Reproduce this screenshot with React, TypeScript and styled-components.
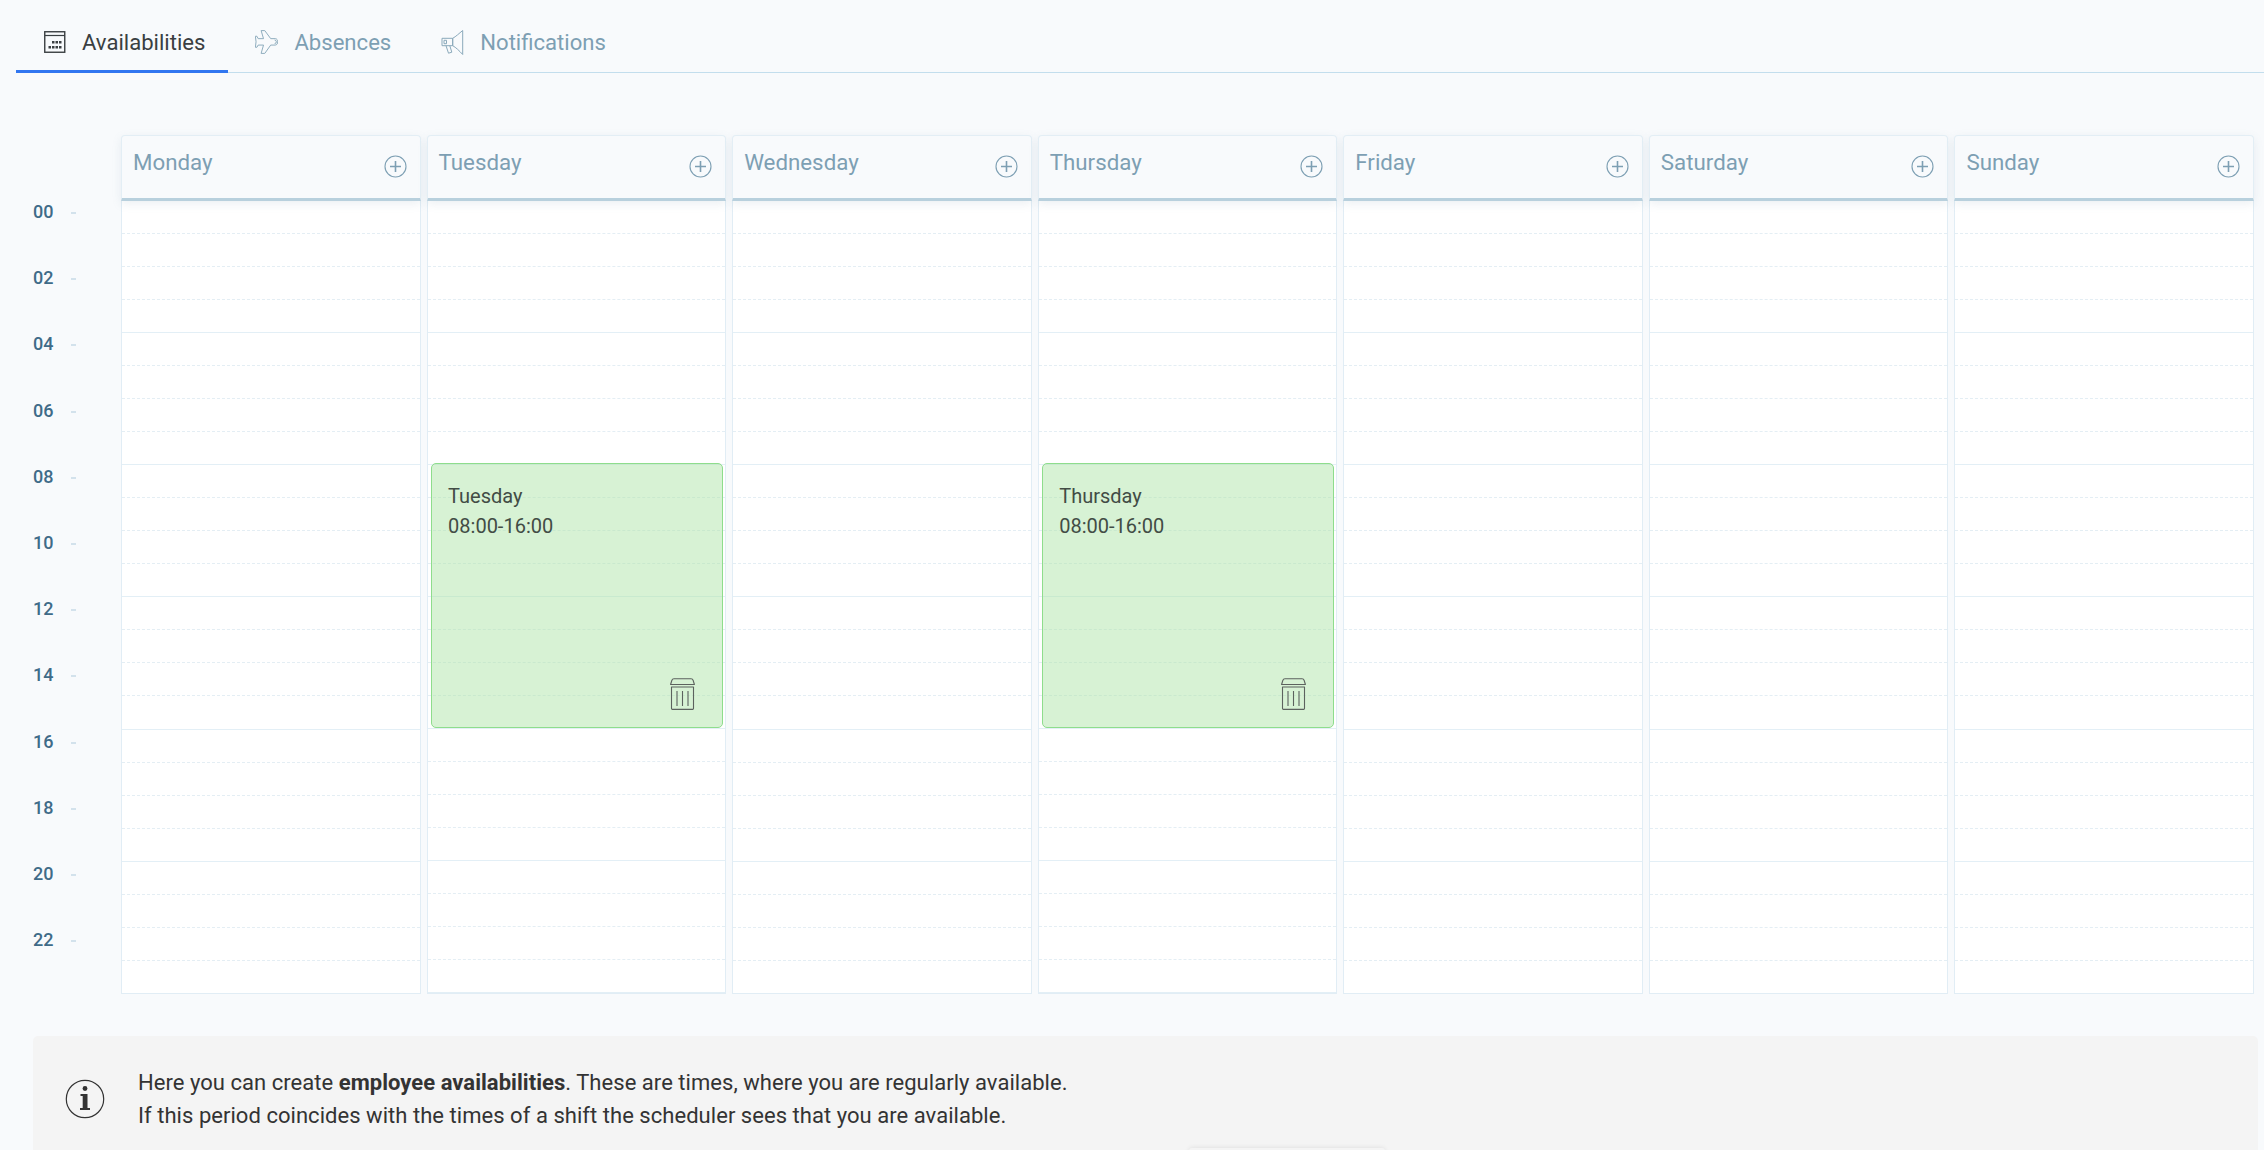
import React from "react";
import styled, { createGlobalStyle } from "styled-components";

const Global = createGlobalStyle`
  html, body { margin: 0; padding: 0; height: 100%; overflow: hidden; background: #f8fafc; }
  * { box-sizing: border-box; }
  #root { font-family: Roboto, "Liberation Sans", sans-serif; }
`;

const Page = styled.div`
  position: relative;
  width: 2264px;
  height: 1150px;
  overflow: hidden;
  display: flex;
  flex-direction: column;
  padding-left: 16px;
`;

const TabBar = styled.nav`
  display: flex;
  height: 73px;
  flex: none;
  border-bottom: 1px solid #c3deed;
`;

const Tab = styled.div<{ $active?: boolean }>`
  height: 73px;
  display: flex;
  align-items: center;
  gap: 16px;
  padding: 14px 23px 0 ${(p) => (p.$active ? "28px" : "27px")};
  font-size: 22.1px;
  color: ${(p) => (p.$active ? "#3a3f42" : "#7d9fb3")};
  border-bottom: 3px solid ${(p) => (p.$active ? "#3176f0" : "transparent")};
  svg { display: block; flex: none; }
`;

const Calendar = styled.section`
  display: flex;
  flex: none;
  margin-top: 62px;
  width: 2238px;
`;

const Axis = styled.div`
  flex: none;
  width: 105px;
  padding-top: 64px;
  display: flex;
  flex-direction: column;
`;

const AxisLabel = styled.div`
  height: 66.2px;
  display: flex;
  align-items: flex-start;
  padding-left: 17px;
  gap: 18px;
  font-size: 18px;
  line-height: 26px;
  font-weight: 500;
  color: #3f6b88;
`;

const AxisDash = styled.span`
  width: 5px;
  height: 2px;
  margin-top: 13px;
  background: #d3e2ec;
`;

const Days = styled.div`
  flex: 1;
  display: grid;
  grid-template-columns: repeat(7, 1fr);
  column-gap: 6px;
`;

const Day = styled.div`
  display: flex;
  flex-direction: column;
  min-width: 0;
`;

const DayHead = styled.header`
  position: relative;
  z-index: 1;
  height: 65.5px;
  display: flex;
  justify-content: space-between;
  padding: 10.5px 13px 0 11px;
  background: #f8fafc;
  border: 1px solid #e3eef5;
  border-bottom: 3px solid #b8d0dd;
  border-radius: 4px 4px 0 0;
  box-shadow: 0 3px 10px rgba(120, 150, 170, 0.14);
`;

const DayName = styled.span`
  font-size: 22.3px;
  line-height: 30px;
  color: #7d9fb3;
`;

const AddIcon = styled.svg`
  margin-top: 8px;
  flex: none;
`;

const DayBody = styled.div`
  position: relative;
  height: 793.5px;
  background: #fff;
  border: 1px solid #e1edf5;
  border-top: 0;
  display: flex;
  flex-direction: column;
`;

const Slot = styled.div<{ $major: boolean }>`
  flex: 1;
  border-bottom: 1px ${(p) => (p.$major ? "solid #e3eff6" : "dashed #e4eef4")};
  &:last-child { border-bottom: 0; }
`;

const Shift = styled.article`
  position: absolute;
  left: 3.5px;
  right: 2px;
  top: 262.5px;
  height: 265px;
  padding: 17px 16px;
  background: rgba(172, 228, 166, 0.48);
  border: 1px solid #8edd8c;
  border-radius: 5px;
  font-size: 20px;
  line-height: 30px;
  color: #424c45;
`;

const ShiftLine = styled.div``;

const TrashBtn = styled.svg`
  position: absolute;
  right: 27px;
  bottom: 17px;
  display: block;
`;

const Info = styled.aside`
  flex: none;
  margin: 42px 6px 0 17px;
  height: 160px;
  display: flex;
  align-items: flex-start;
  gap: 33px;
  padding: 29.5px 0 0 32px;
  background: #f4f4f4;
  border-radius: 5px;
`;

const InfoIcon = styled.svg`
  flex: none;
  margin-top: 13px;
`;

const InfoText = styled.p`
  margin: 0;
  font-size: 22px;
  line-height: 33px;
  letter-spacing: 0.04px;
  color: #333;
  strong { font-weight: 700; }
`;

const Peek = styled.div`
  position: absolute;
  left: 1189px;
  bottom: -4px;
  width: 196px;
  height: 6px;
  box-shadow: 0 0 5px rgba(0, 0, 0, 0.1);
  border-radius: 4px;
`;

const CalendarIcon = () => (
  <svg width="22" height="22" viewBox="0 0 22 22" fill="none" stroke="#3a3f42">
    <rect x="0.75" y="0.75" width="20" height="20.5" strokeWidth="1.4" />
    <path d="M1 4.5h20" strokeWidth="1.2" />
    <g fill="#3a3f42" stroke="none">
      {[8, 11.5, 15].map((x) => (
        <rect key={`a${x}`} x={x} y="10" width="2.5" height="2.500" />
      ))}
      {[4.5, 8, 11.5, 15].map((x) => (
        <rect key={`b${x}`} x={x} y="15" width="2.5" height="2.500" />
      ))}
    </g>
  </svg>
);

const PlaneIcon = () => (
  <svg width="23" height="24" viewBox="0 0 24 25" fill="none" stroke="#8aa9bb" strokeWidth="1" strokeLinejoin="round">
    <path d="M6.400.6h3.800l6.200 8.400h4.800c1.700 0 2.500 1.700 2.500 3.300s-.9 3.400-2.500 3.400h-4.800l-6.200 8.700H6.400l2.500-8.700H3.300L2 18H.4l.7-5.700L.4 6.500H2L3.300 9h5.600z" />
    <path d="M20.500 10.500a1.800 1.800 0 0 1 0 3.600" />
  </svg>
);

const MegaphoneIcon = () => (
  <svg width="23" height="25" viewBox="0 0 23 25" fill="none" stroke="#8aa9bb" strokeWidth="1" strokeLinejoin="round">
    <path d="M21.700.5v24C18 20.500 15 17.500 11.700 15.700V8.300C15 6.500 18 3.500 21.700.5z" />
    <rect x="1" y="8.300" width="10.700" height="7.400" />
    <path d="M5 15.700 7.500 23.200l3.300-1L8.800 15.700" />
    <path d="M3 10.300h2.500v3.400H3z" />
  </svg>
);

const PlusIcon = () => (
  <AddIcon width="23" height="23" viewBox="0 0 23 23" fill="none" stroke="#7d9fb3">
    <circle cx="11.5" cy="11.5" r="10.5" strokeWidth="1.1" />
    <path d="M11.5 6v11M6 11.5h11" strokeWidth="1.6" />
  </AddIcon>
);

const TrashIcon = () => (
  <TrashBtn width="25" height="32" viewBox="0 0 25 32" fill="none" stroke="#5c625e" strokeWidth="1.1" strokeLinejoin="round">
    <path d="M.6 6.500 1.800 2.500C2.200 1.300 3 .8 4 .8h17c1 0 1.800.5 2.200 1.700l1.200 4z" />
    <path d="M1.500 9h22v21.200a1.200 1.200 0 0 1-1.200 1.200H2.700a1.200 1.200 0 0 1-1.200-1.200z" />
    <path d="M7 13v15M12.500 13v15M18 13v15" />
  </TrashBtn>
);

const InfoGlyph = () => (
  <InfoIcon width="40" height="40" viewBox="0 0 40 40" fill="none">
    <circle cx="20" cy="20" r="18.700" stroke="#333" strokeWidth="1.2" />
    <circle cx="20" cy="9.500" r="2.400" fill="#333" />
    <path d="M15.500 15h7v14h2.500v2h-10v-2h2.700V17h-2.200z" fill="#333" />
  </InfoIcon>
);

const hours = ["00", "02", "04", "06", "08", "10", "12", "14", "16", "18", "20", "22"];
const days = ["Monday", "Tuesday", "Wednesday", "Thursday", "Friday", "Saturday", "Sunday"];
const shiftDays = new Set(["Tuesday", "Thursday"]);

export default function App() {
  return (
    <Page>
      <Global />
      <TabBar>
        <Tab $active>
          <CalendarIcon />
          Availabilities
        </Tab>
        <Tab>
          <PlaneIcon />
          Absences
        </Tab>
        <Tab>
          <MegaphoneIcon />
          Notifications
        </Tab>
      </TabBar>
      <Calendar>
        <Axis>
          {hours.map((h) => (
            <AxisLabel key={h}>
              {h}
              <AxisDash />
            </AxisLabel>
          ))}
        </Axis>
        <Days>
          {days.map((d) => (
            <Day key={d}>
              <DayHead>
                <DayName>{d}</DayName>
                <PlusIcon />
              </DayHead>
              <DayBody>
                {Array.from({ length: 24 }, (_, i) => (
                  <Slot key={i} $major={(i + 1) % 4 === 0} />
                ))}
                {shiftDays.has(d) && (
                  <Shift>
                    <ShiftLine>{d}</ShiftLine>
                    <ShiftLine>08:00-16:00</ShiftLine>
                    <TrashIcon />
                  </Shift>
                )}
              </DayBody>
            </Day>
          ))}
        </Days>
      </Calendar>
      <Info>
        <InfoGlyph />
        <InfoText>
          Here you can create <strong>employee availabilities</strong>. These are times, where you are regularly available.
          <br />
          If this period coincides with the times of a shift the scheduler sees that you are available.
        </InfoText>
      </Info>
      <Peek />
    </Page>
  );
}
